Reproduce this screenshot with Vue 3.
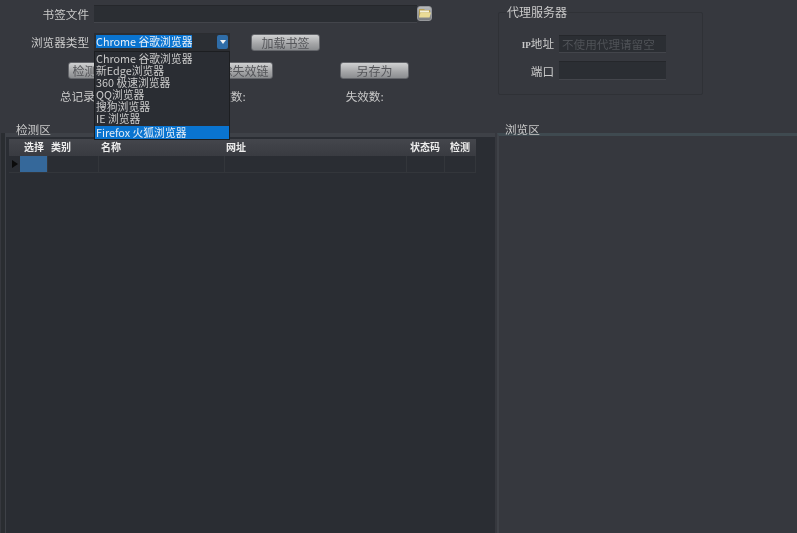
<script setup>
const options = ['Chrome 谷歌浏览器', '新Edge浏览器', '360 极速浏览器', 'QQ浏览器', '搜狗浏览器', 'IE 浏览器', 'Firefox 火狐浏览器']
const columns = [
  { label: '选择', w: 40, pad: 15, cell: 28 },
  { label: '类别', w: 50, pad: 2, cell: 51 },
  { label: '名称', w: 126, pad: 2, cell: 126 },
  { label: '网址', w: 182, pad: 1, cell: 182 },
  { label: '状态码', w: 38, pad: 3, cell: 38 },
  { label: '检测', w: 31, pad: 5, cell: 31 }
]
</script>

<template>
  <div class="app">
    <section class="top">
      <div class="form">
        <div class="row row1">
          <label class="lbl">书签文件</label>
          <div class="field file"></div>
          <button class="folder" aria-label="打开">
            <svg width="12" height="10" viewBox="0 0 12 10">
              <path d="M0 1h5l1 1h5v7H0z" fill="#b89f52" />
              <path d="M1 2.5h9v2H1z" fill="#f4f1df" />
              <path d="M1.5 4.5H12L10.5 9.5H0z" fill="#eadb96" />
            </svg>
          </button>
        </div>
        <div class="row row2">
          <label class="lbl">浏览器类型</label>
          <div class="select">
            <span class="sel-text">Chrome 谷歌浏览器</span>
            <span class="sel-btn"><i></i></span>
            <ul class="menu">
              <li v-for="(o, i) in options" :key="o" :class="{ active: i === 6 }">{{ o }}</li>
            </ul>
          </div>
          <button class="btn load">加载书签</button>
        </div>
        <div class="row row3">
          <button class="btn">检测失效链</button>
          <button class="btn">清除失效链</button>
          <button class="btn">另存为</button>
        </div>
        <div class="row row4">
          <span class="s1">总记录数:</span>
          <span class="s2">有效数:</span>
          <span class="s3">失效数:</span>
        </div>
      </div>
      <fieldset class="proxy">
        <legend>代理服务器</legend>
        <div class="p-row">
          <label><b>IP</b>地址</label>
          <div class="field p-field hint">不使用代理请留空</div>
        </div>
        <div class="p-row">
          <label>端口</label>
          <div class="field p-field tall"></div>
        </div>
      </fieldset>
    </section>
    <section class="bottom">
      <div class="panel left">
        <h2>检测区</h2>
        <div class="well">
          <div class="table">
            <div class="thead">
              <span v-for="c in columns" :key="c.label" class="th" :style="{ width: c.w + 'px', paddingLeft: c.pad + 'px' }">{{ c.label }}</span>
            </div>
            <div class="tbody">
              <span class="arrow"><i></i></span>
              <span v-for="(c, i) in columns" :key="c.label" class="td" :class="{ sel: i === 0 }" :style="{ width: c.cell + 'px' }"></span>
            </div>
          </div>
        </div>
      </div>
      <div class="panel right">
        <h2>浏览区</h2>
        <div class="well"></div>
      </div>
    </section>
  </div>
</template>

<style scoped>
.app {
  width: 797px;
  height: 533px;
  overflow: hidden;
  background: #36383e;
  color: #cacaca;
  font: 11.6px/14px "Noto Sans CJK SC", "Liberation Sans", sans-serif;
  display: flex;
  flex-direction: column;
  filter: blur(0.3px);
}
.top { height: 122px; display: flex; flex: none; }
.form { width: 498px; flex: none; }
.row { display: flex; align-items: center; }
.lbl { width: 89px; text-align: right; flex: none; }
.row1 { height: 18px; margin-top: 5px; }
.field {
  background: #2b2e33;
  border-top: 1px solid #25272b;
  border-bottom: 1px solid #43454b;
  box-sizing: border-box;
}
.file { width: 323px; height: 18px; margin-left: 5px; }
.folder {
  width: 15px;
  height: 15px;
  padding: 0;
  margin-top: -2px;
  border: 1px solid #96989b;
  border-radius: 3px;
  background: linear-gradient(#b8babc, #7b7d80);
  display: flex;
  align-items: center;
  justify-content: center;
}
.row2 { height: 18px; margin-top: 10px; }
.select {
  position: relative;
  margin-left: 5px;
  width: 136px;
  height: 18px;
  box-sizing: border-box;
  background: #2b2e33;
  border: 1px solid #2b2d31;
  padding-left: 1px;
  display: flex;
  align-items: center;
}
.sel-text {
  background: #0a74d0;
  color: #e6eef6;
  font-size: 10.8px;
  line-height: 13px;
  width: 96px;
  margin-top: -2px;
  white-space: nowrap;
}
.sel-btn {
  position: absolute;
  right: 1px;
  top: 1px;
  width: 11px;
  height: 14px;
  border-radius: 2px;
  background: #2f6da8;
  display: flex;
  align-items: center;
  justify-content: center;
}
.sel-btn i { border: 3px solid transparent; border-top: 4px solid #f1f1f1; border-bottom: 0; }
.menu {
  position: absolute;
  left: -1px;
  top: 17px;
  z-index: 5;
  width: 136px;
  box-sizing: border-box;
  margin: 0;
  padding: 0;
  list-style: none;
  background: #2a2d33;
  border: 1px solid #1c1e21;
  font-size: 10.8px;
}
.menu li { height: 12px; line-height: 12px; padding-left: 1px; white-space: nowrap; overflow: visible; }
.menu li.active { height: 13px; background: #0a74d0; color: #e6eef6; margin-top: 2px; }
.btn {
  width: 69px;
  height: 17px;
  padding: 0;
  border: 1px solid #63656a;
  border-radius: 3px;
  background: linear-gradient(#d0d1d2, #a3a4a6 60%, #8b8d90);
  color: #55565a;
  font: 12px/15px "Noto Sans CJK SC", "Liberation Sans", sans-serif;
}
.load { margin-left: 21px; }
.row3 { height: 17px; margin-top: 11px; padding-left: 68px; gap: 67px; }
.row4 { height: 14px; margin-top: 10px; }
.row4 span { white-space: nowrap; }
.s1 { margin-left: 60px; }
.s2 { margin-left: 98px; }
.s3 { margin-left: 100px; }
.proxy {
  width: 205px;
  height: 90px;
  box-sizing: border-box;
  margin: 5px 0 0;
  padding: 0;
  border: 1px solid #2f3136;
  border-radius: 2px;
  min-width: 0;
}
.proxy legend { padding: 0 1px; margin-left: 7px; font-size: 12px; line-height: 14px; }
.p-row { display: flex; align-items: center; }
.proxy legend + .p-row { margin-top: 16px; }
.p-row + .p-row { margin-top: 8px; }
.p-row label { width: 55px; text-align: right; flex: none; }
.p-row b { font-size: 9px; font-family: "Liberation Serif", serif; }
.p-field { width: 107px; height: 18px; margin-left: 5px; }
.p-field.tall { height: 19px; }
.hint { color: #4f5257; padding-left: 3px; line-height: 16px; white-space: nowrap; }
.bottom { flex: 1; display: flex; min-height: 0; }
.panel { position: relative; display: flex; flex-direction: column; }
.panel h2 {
  margin: 0;
  font: inherit;
  height: 14px;
  position: absolute;
  top: 0;
  z-index: 1;
}
.left { width: 495px; padding-left: 1px; box-sizing: border-box; flex: none; }
.left h2 { left: 16px; }
.right { flex: 1; margin-left: 2px; }
.right h2 { left: 8px; }
.well {
  flex: 1;
  margin-top: 11px;
  box-sizing: border-box;
  border-top: 4px solid #3e4147;
}
.left .well {
  background: #2a2d33;
  border-left: 1px solid #3e4147;
  margin-left: 4px;
  padding: 2px 0 0 3px;
  box-shadow: -4px 0 0 #2a2d31;
}
.right .well { background: #36383e; border-left: 2px solid #3f4248; border-top-color: #3f4a50; border-top-width: 3px; }
.table { width: 467px; }
.thead { height: 17px; display: flex; background: linear-gradient(#44464c, #393b41); }
.th { box-sizing: border-box; color: #eeeeee; font-weight: 700; font-size: 10px; line-height: 15px; white-space: nowrap; flex: none; }
.tbody { height: 17px; display: flex; border-bottom: 1px solid #33363b; box-sizing: border-box; }
.arrow { width: 11px; flex: none; display: flex; align-items: center; padding-left: 3px; box-sizing: border-box; }
.arrow i { border: 4px solid transparent; border-left: 6px solid #0b0b0b; border-right: 0; }
.td { box-sizing: border-box; border-right: 1px solid #33363b; flex: none; }
.td.sel { background: #35689a; }
</style>
